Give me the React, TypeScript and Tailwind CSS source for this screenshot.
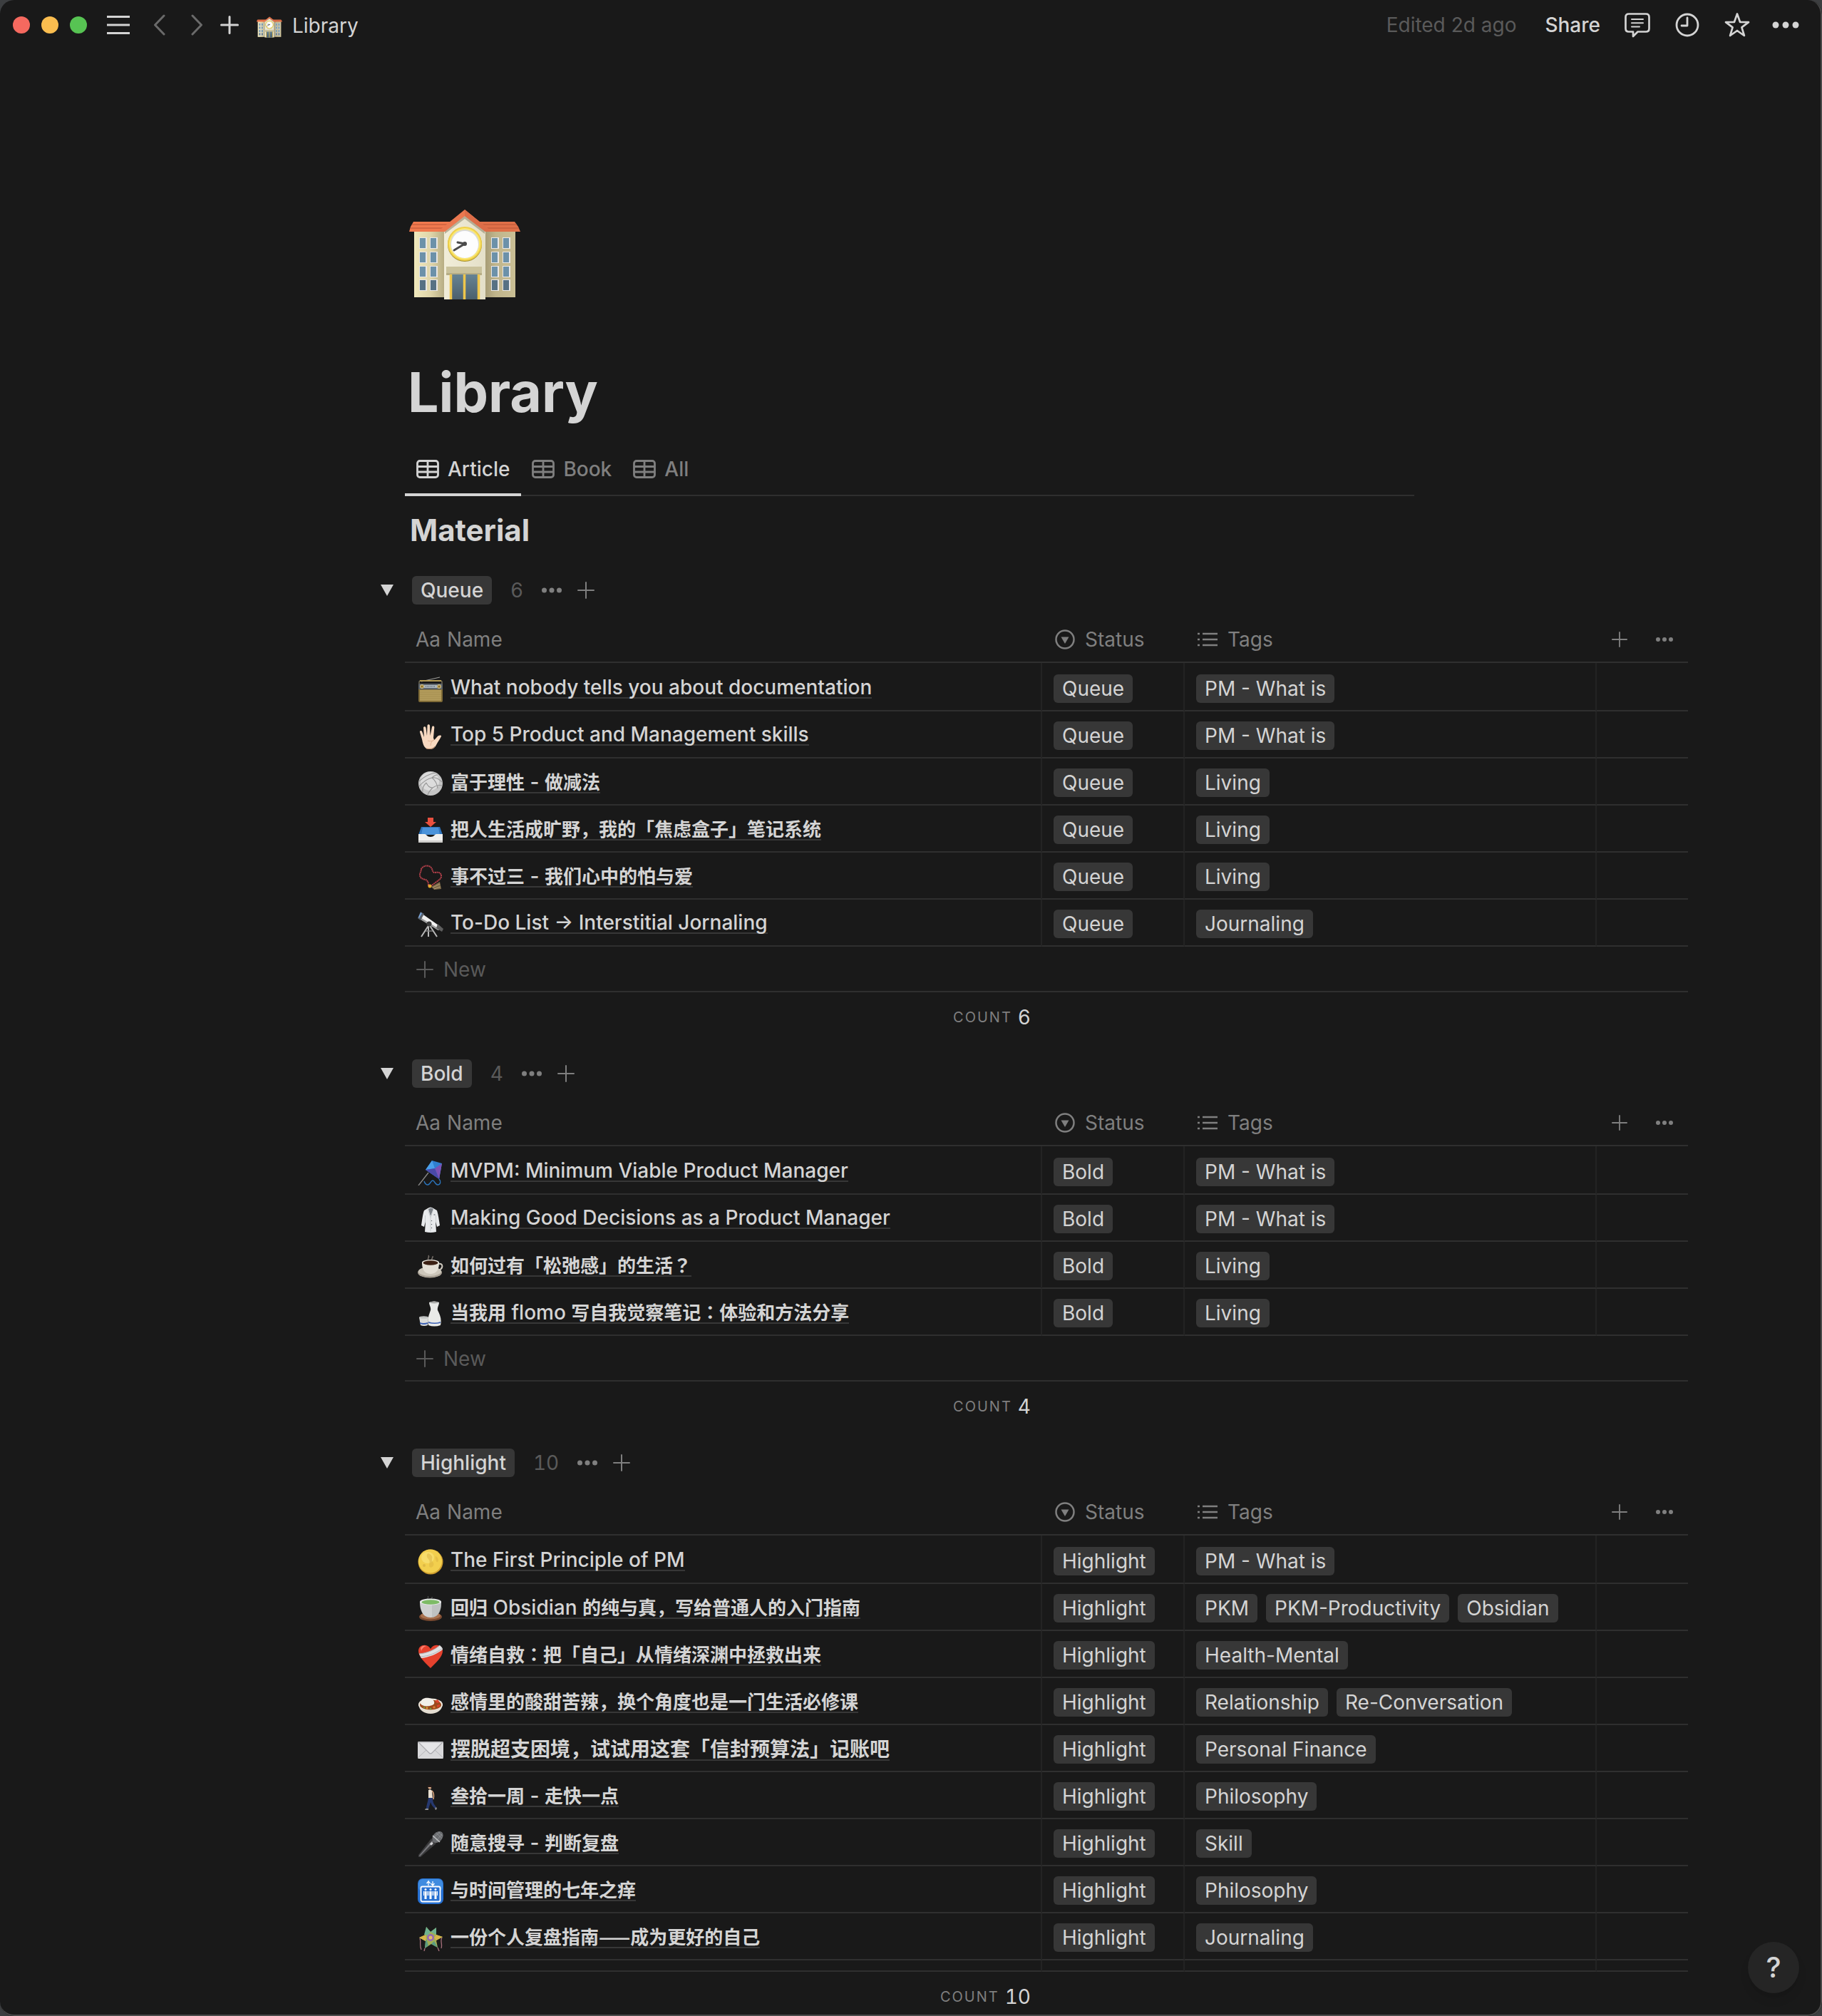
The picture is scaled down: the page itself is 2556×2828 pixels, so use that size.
import React from "react";

type IconProps = { className?: string };

function School({ className }: IconProps) {
  const rows = [39, 59, 79, 98];
  const cols = [14, 29, 115, 131];
  return (
    <svg viewBox="0 0 156 126" className={className} role="img" aria-label="School">
      <defs>
        <linearGradient id="wing-left" x1="0" x2="1">
          <stop offset="0" stopColor="#f1e9bd" />
          <stop offset="0.55" stopColor="#ded4a8" />
          <stop offset="1" stopColor="#b5ab82" />
        </linearGradient>
        <linearGradient id="wing-right" x1="0" x2="1">
          <stop offset="0" stopColor="#a79c76" />
          <stop offset="0.35" stopColor="#c0b58c" />
          <stop offset="1" stopColor="#cabf95" />
        </linearGradient>
        <linearGradient id="tower" x1="0" x2="1">
          <stop offset="0" stopColor="#f1edd8" />
          <stop offset="1" stopColor="#e4dfc8" />
        </linearGradient>
        <linearGradient id="door" x1="0" x2="0" y1="0" y2="1">
          <stop offset="0" stopColor="#668393" />
          <stop offset="1" stopColor="#4b5f6c" />
        </linearGradient>
      </defs>
      <rect x="7" y="28" width="43" height="95" fill="url(#wing-left)" />
      <rect x="107" y="28" width="42" height="95" fill="url(#wing-right)" />
      <path d="M6 17h54v14H0l2-7z" fill="#f0794e" />
      <path d="M96 17h52l5 7 3 7H96z" fill="#df7048" />
      <path d="M4 21h50M2 26h48M100 21h51M106 26h48" stroke="#b85436" strokeWidth="1" />
      <path d="M49 28 78 8l29 20v98H49z" fill="url(#tower)" />
      <path d="M78 8 106 29v5L78 13 50 34v-5z" fill="#8a8468" opacity="0.55" />
      <path d="M78 0 116 31h-9L78 9 50 31H40z" fill="#ea7850" />
      <path d="M78 0 116 31h-9L78 9z" fill="#dc6d48" />
      {rows.map((y) =>
        cols.map((x) => (
          <g key={`${x}-${y}`}>
            <rect x={x} y={y} width="11" height="16" fill="#e9e7e6" />
            <rect x={x + 1} y={y + 1} width="8" height="14" fill={y > 90 ? "#577184" : "#6c91a9"} />
          </g>
        ))
      )}
      <circle cx="78" cy="49" r="24" fill="#a38f2e" />
      <circle cx="78" cy="48" r="24" fill="#efd04a" />
      <circle cx="78" cy="48" r="22" fill="#fbe873" />
      <circle cx="78" cy="48" r="20" fill="#d9d9d9" />
      <circle cx="78" cy="49" r="19" fill="#fdfdfd" />
      <path d="M68 46l10 2-15 9" fill="none" stroke="#4b4b4b" strokeWidth="3" strokeLinecap="round" strokeLinejoin="round" />
      <circle cx="78" cy="48" r="3" fill="#4b4b4b" />
      <rect x="52" y="80" width="50" height="12" fill="#b6ad86" />
      <rect x="52" y="80" width="50" height="9" fill="#cac29c" />
      <rect x="57" y="91" width="42" height="35" fill="url(#door)" />
      <path d="M58.500 91v35M77.500 91v35M97.500 91v35" stroke="#eec64c" strokeWidth="3.500" />
    </svg>
  );
}

const emoji: Record<string, React.ReactNode> = {
  radio: (
    <>
      <path d="M5 7 31 1" stroke="#9a9a96" strokeWidth="1.200" />
      <path d="M2 15V8q0-2 2-2h28q2 0 2 2v7" fill="none" stroke="#6f6a58" strokeWidth="1.500" />
      <rect x="1" y="10" width="34" height="26" rx="2" fill="#7f6b37" />
      <rect x="3" y="5" width="30" height="2" fill="#b39a52" />
      <rect x="1" y="10" width="34" height="8" rx="1" fill="#5d646b" />
      <rect x="9" y="12" width="18" height="4" fill="#aeb8bf" />
      <path d="M11 14h14" stroke="#3c4247" strokeDasharray="1 1" />
      <circle cx="6" cy="14" r="3" fill="#c9b478" />
      <circle cx="30" cy="14" r="3" fill="#c9b478" />
      <circle cx="6" cy="14" r="1.500" fill="#8a6c22" />
      <circle cx="30" cy="14" r="1.500" fill="#8a6c22" />
      <rect x="3" y="19" width="30" height="15" fill="#b39c5c" />
      <path d="M3 22h30M3 25h30M3 28h30M3 31h30" stroke="#a58e50" strokeWidth="1" />
    </>
  ),
  hand: (
    <>
      <path
        d="M12 35C8 32 7 27 6 22L3 12c-.6-2 2-3 3-1l3 8L8 6c0-2 3-2.500 3.500 0L13 17l.500-14c0-2.500 3.500-2.500 3.500 0l.500 14L20 5c.500-2.300 3.500-1.800 3.300.500L22 20l1 3c2-1 4-5 6-6 2-1.200 4.500-.500 4 1-2 4-5 8-7 12-1.500 3-4 5.500-7 5.700-3 .300-5.500 0-7-.700z"
        fill="#f8d9c0"
      />
      <path d="M14 24c3 1 6 1 9-1-3 1-5 4-5 8" fill="none" stroke="#e2b393" strokeWidth="1" />
      <path d="M12 35c4 1 9 1 12-3" fill="none" stroke="#b98763" strokeWidth="1" />
    </>
  ),
  ball: (
    <>
      <circle cx="18" cy="18" r="17" fill="#c4c4c4" />
      <circle cx="17" cy="15" r="13" fill="#dcdcdc" />
      <path
        d="M2 15C8 9 15 5 25 3M2 22C8 15 15 11 20 10M7 30c-1-5 1-9 5-13M12 17c2 5 5 7 9 7M20 10c4 3 7 8 8 15M28 6c-4 0-6 2-8 4 4-1 9 1 14 6M21 24c4-3 9-4 13-3M21 24c-3 3-6 7-7 10"
        fill="none"
        stroke="#969696"
        strokeWidth="1.100"
      />
    </>
  ),
  inbox: (
    <>
      <path d="M5 13h26l4 11H1z" fill="#2f74bd" />
      <path d="M7 14h22l2 10H5z" fill="#4b93da" />
      <path d="M1 23h9c2 0 3 4 8 4s6-4 8-4h9v11q0 1-1 1H2q-1 0-1-1z" fill="#f1f0ee" />
      <path d="M1 32h34v2q0 1-1 1H2q-1 0-1-1z" fill="#cfcecb" />
      <path d="M14 0h8v6h4l-8 7-8-7h4z" fill="#e8503f" />
    </>
  ),
  beads: (
    <>
      <path
        d="M15 29c0-4-1-7-4-8-4-1-8-2-8-7 0-3 2-5 2-8 3-6 13-6 15 0 1 3 1 5 4 5 5-1 9 0 9 5 0 4-4 6-8 9l-8 6z"
        fill="none"
        stroke="#b3404a"
        strokeWidth="2"
        strokeDasharray="2 .6"
      />
      <circle cx="17" cy="30" r="2.500" fill="#e2a82f" />
      <path d="M19 31l12-7 2 10-10 1z" fill="#7d6a49" />
      <path d="M21 32l10-5M23 34l9-3" stroke="#b39b72" strokeWidth="1" />
    </>
  ),
  telescope: (
    <>
      <path d="M15 18v17M16 18 5 35M16 18l11 17" stroke="#b8b8b8" strokeWidth="2" />
      <path d="M11 27h10" stroke="#7f7f7f" strokeWidth="1.500" />
      <path d="M5 2 32 21l-3 5L1 9z" fill="#f1f1f1" />
      <path d="M1 9l28 17 1-2L2 7z" fill="#9b9b9b" />
      <path d="M4 0l5 3-5 9-4-3z" fill="#59616b" />
      <path d="M4 1l2 1-4 7-1-1z" fill="#7aa8e0" />
      <path d="M28 17l8 7-2 4-8-5z" fill="#5e5e5e" />
      <circle cx="16" cy="17" r="3.500" fill="#3a3a3a" />
    </>
  ),
  kite: (
    <>
      <path d="M15 18 1 36" stroke="#8b8b8b" strokeWidth="1.300" />
      <path d="M20 1 34 5 30 27 11 14z" fill="#2f7fd0" />
      <path d="M20 1l4 11-13 2z" fill="#4aa0ea" />
      <path d="M34 5 24 12l6 15z" fill="#7b52b5" />
      <path d="M24 12 11 14l19 13z" fill="#4a49a8" />
      <path d="M30 27c3 3 2 8-2 8s-4-6-7-6-3 6-7 6-4-3-5-5" fill="none" stroke="#2b74ba" strokeWidth="1.500" />
    </>
  ),
  coat: (
    <>
      <path d="M14 2q4-3 8 0l5 3c2 6 3 15 4 21l-4 2-2-8 1 15q-8 2-16 0l1-15-2 8-4-2C6 20 7 10 9 5z" fill="#e8eaec" />
      <path d="M15 3l3 10 4-10q-3-3-7 0z" fill="#7d8288" />
      <path d="M14 3l4 12 4-12M18 15v20M10.500 12v10M25.500 12v10" fill="none" stroke="#c1c5c8" strokeWidth="0.800" />
      <path d="M19.500 19v1M19.500 24v1M19.500 29v1M22.500 11h2" stroke="#595f66" strokeWidth="1.200" />
    </>
  ),
  coffee: (
    <>
      <path d="M15 8c-2-2 2-3 0-6M20 8c-1-2 2-3 1-5" fill="none" stroke="#77706a" strokeWidth="1.500" />
      <ellipse cx="17" cy="26" rx="17" ry="7.500" fill="#a9a195" />
      <ellipse cx="17" cy="24.500" rx="16" ry="6.500" fill="#cdc7bb" />
      <path d="M29 14c7-2 8 8-2 9" fill="none" stroke="#cfc9be" strokeWidth="2" />
      <path d="M6 12h24c0 9-3 16-12 16S6 21 6 12z" fill="#e4dfd5" />
      <ellipse cx="18" cy="12" rx="12" ry="4" fill="#efebe2" />
      <ellipse cx="18" cy="12.500" rx="10.500" ry="3.200" fill="#3c2013" />
    </>
  ),
  sake: (
    <>
      <path d="M16 2q7-3 14 0c0 4-3 7-2 11 3 6 6 12 4 21q-9 3-17 0c-2-9 1-15 3-21 1-4-2-7-2-11z" fill="#e9eae8" />
      <path d="M15 29q9 3 17 0l-.2 2q-8 2-16.600 0z" fill="#3d62b5" />
      <ellipse cx="23" cy="2" rx="6" ry="1.500" fill="#a9aaa8" />
      <path d="M2 23h13l-1 11q-5 2-10 0z" fill="#dcdddb" />
      <ellipse cx="8.500" cy="23" rx="6.500" ry="1.800" fill="#c1c3c2" />
      <path d="M3 30q5 2 11 0v2q-5 2-11 0z" fill="#3d62b5" />
    </>
  ),
  moon: (
    <>
      <circle cx="18" cy="18" r="17.500" fill="#cf9f2f" />
      <circle cx="17.500" cy="17" r="16.500" fill="#f2cf4e" />
      <ellipse cx="14" cy="12" rx="9" ry="8" fill="#f7dd6c" />
      <path d="M15 6c4 2 6 4 5 8s4 5 2 9-6 3-6 0 2-6-1-9-3-7 0-8zM25 10c4 2 5 6 3 8s-4-6-3-8z" fill="#d9b13f" opacity="0.5" />
      <circle cx="9" cy="23" r="2" fill="#dfb945" />
    </>
  ),
  tea: (
    <>
      <path d="M14 5c-1-2 2-3 0-5M19 5c-1-2 2-2 1-4" fill="none" stroke="#686868" strokeWidth="1" />
      <ellipse cx="18" cy="29" rx="16" ry="6" fill="#7b4a30" />
      <ellipse cx="18" cy="27.500" rx="14" ry="5" fill="#a8714e" />
      <path d="M3 8h30c0 10-3 22-15 22S3 18 3 8z" fill="#cfd1d1" />
      <path d="M20 10h13c0 10-3 19-13 20z" fill="#b4b7b8" opacity="0.6" />
      <ellipse cx="18" cy="8" rx="15" ry="4.500" fill="#e8eaea" />
      <ellipse cx="18" cy="8.500" rx="12.500" ry="3.200" fill="#7dbb66" />
    </>
  ),
  heart: (
    <>
      <path d="M18 35C10 27 1 19 1 11 1 1 14 0 18 8 22 0 35 1 35 11c0 8-9 16-17 24z" fill="#e5412d" />
      <path d="M4 7C6 3 10 3 12 4 8 5 6 8 5 11z" fill="#fb8171" />
      <path d="M2 15C13 14 23 10 31 3q3 2 4 6C27 15 16 20 5 21z" fill="#dfe1e3" />
      <path d="M2 15C13 14 23 10 31 3M4 19c12-1 22-5 31-12" fill="none" stroke="#b2b6ba" strokeWidth="1" />
    </>
  ),
  curry: (
    <>
      <path d="M1 20c1 8 8 13 17 13s16-5 17-13z" fill="#e4ddd1" />
      <ellipse cx="18" cy="20" rx="17" ry="8.500" fill="#efe9df" />
      <ellipse cx="18" cy="20.500" rx="15" ry="7" fill="#9c4a1d" />
      <path d="M4 19c0-8 7-9 12-8s8 4 7 8c-3 4-16 5-19 0z" fill="#f2efe8" />
      <path d="M24 15l4-2 3 4-4 1zM27 21l4-1v3l-4 1z" fill="#d9432a" />
      <circle cx="13" cy="25" r="1.500" fill="#d8a33b" />
      <circle cx="18" cy="26" r="1.300" fill="#6fa23f" />
      <circle cx="23" cy="24" r="1.800" fill="#d87b32" />
      <circle cx="9" cy="24" r="1.200" fill="#6fa23f" />
    </>
  ),
  envelope: (
    <>
      <rect x="0" y="6" width="36" height="24" rx="1.500" fill="#d8d8da" />
      <path d="M0 29 13 17M36 29 23 17" stroke="#b4b4b8" strokeWidth="1" />
      <path d="M1 7h34L20 22q-2 2-4 0z" fill="#e6e6e8" stroke="#aaaaae" strokeWidth="1.200" />
    </>
  ),
  walker: (
    <>
      <path d="M15 8q3-2 5 1l1 11h-6z" fill="#e9dfd0" />
      <path d="M20 9c3 3 3 7 2 12" fill="none" stroke="#dba57e" strokeWidth="1.500" />
      <circle cx="17" cy="4" r="2.500" fill="#e2b08c" />
      <path d="M13.500 4c0-5 7-5 7 0l-1 2-1-2z" fill="#241c1a" />
      <path d="M15 19h6c0 7 2 9 5 13l-2 2c-4-4-5-6-6-9-1 4-2 6-3 10h-3c0-6 2-9 3-16z" fill="#26386f" />
      <path d="M11 34h4v2h-5zM25 32l2 1-1 3-2-1z" fill="#8f8f91" />
    </>
  ),
  mic: (
    <>
      <path d="M19 10l7 7L4 36H1v-3z" fill="#3c3c3e" />
      <path d="M20 13l2 2L3 35l-1-1z" fill="#77777b" />
      <rect x="17" y="16" width="4" height="3" fill="#d6d6d8" transform="rotate(-45 19 17)" />
      <ellipse cx="28" cy="8" rx="6.500" ry="9" fill="#6a6c6f" transform="rotate(40 28 8)" />
      <path d="M26 2l8 8M29 1l6 6M31 1 22 9M34 4l-8 9" stroke="#94969a" strokeWidth="0.700" />
      <path d="M21 6l10 9" stroke="#bfc0c2" strokeWidth="1.500" />
    </>
  ),
  elevator: (
    <>
      <rect x="0" y="0" width="36" height="36" rx="7" fill="#2670d2" />
      <rect x="1" y="1" width="34" height="17" rx="6" fill="#3f8be0" />
      <path d="M15 10V4l-2.500 3M15 4l2.500 3M21 4v6l-2.500-3M21 10l2.500-3" fill="none" stroke="#fff" strokeWidth="1.200" />
      <rect x="4.500" y="11.500" width="27" height="21" rx="2" fill="#2670d2" stroke="#fff" strokeWidth="1.800" />
      <path d="M11 18v11M18 18v11M25 18v11" stroke="#fff" strokeWidth="3" />
      <path d="M8.500 18v6M13.500 18v6M15.500 18v6M20.500 18v6M22.500 18v6M27.500 18v6" stroke="#fff" strokeWidth="1" />
      <circle cx="11" cy="15.500" r="1.500" fill="#fff" />
      <circle cx="18" cy="15.500" r="1.500" fill="#fff" />
      <circle cx="25" cy="15.500" r="1.500" fill="#fff" />
    </>
  ),
  pinata: (
    <>
      <path d="M12 2l6 7 8-6v10l9 3-9 5 2 10-9-5-9 6 1-10-9-5 9-4z" fill="#a3ad55" />
      <path d="M12 2l6 7-4 5-5-1zM26 3v10l-4-2-4-2z" fill="#6fb28f" />
      <path d="M35 16l-9 5-3-4 3-4zM2 17l9-4 1 6-1 3z" fill="#d6b64a" />
      <path d="M12 19l-1 3-1 10 5-4zM23 22l5 9-9-5z" fill="#5a9c80" />
      <circle cx="18" cy="17" r="5" fill="#9668b4" />
      <circle cx="18" cy="17" r="2.500" fill="#dfc069" />
      <path d="M3 18c2 5-1 9 2 16M34 17c-3 5 1 9-1 15M10 32l-1 4M28 31l2 5" fill="none" stroke="#a7707c" strokeWidth="1.300" />
    </>
  ),
};

function Plus({ className }: IconProps) {
  return (
    <svg viewBox="0 0 24 24" className={className} fill="none" stroke="currentColor" strokeWidth="2" strokeLinecap="round" aria-hidden="true">
      <path d="M12 1v22M1 12h22" />
    </svg>
  );
}

function Dots({ className }: IconProps) {
  return (
    <svg viewBox="0 0 28 8" className={className} fill="currentColor" aria-hidden="true">
      <circle cx="3.500" cy="4" r="3.500" />
      <circle cx="14" cy="4" r="3.500" />
      <circle cx="24.500" cy="4" r="3.500" />
    </svg>
  );
}

function TableIcon() {
  return (
    <svg viewBox="0 0 32 26" className="h-[26px] w-8" fill="none" stroke="currentColor" strokeWidth="2.800" aria-hidden="true">
      <rect x="1.500" y="1.500" width="29" height="23" rx="3.500" />
      <path d="M1 9.500h30M1 17h30M16 2v22" />
    </svg>
  );
}

type Row = { icon: string; title: string; tags: string[] };
type Group = { name: string; count: number; rows: Row[]; clipped?: boolean };

const groups: Group[] = [
  {
    name: "Queue",
    count: 6,
    rows: [
      { icon: "radio", title: "What nobody tells you about documentation", tags: ["PM - What is"] },
      { icon: "hand", title: "Top 5 Product and Management skills", tags: ["PM - What is"] },
      { icon: "ball", title: "富于理性 - 做减法", tags: ["Living"] },
      { icon: "inbox", title: "把人生活成旷野，我的「焦虑盒子」笔记系统", tags: ["Living"] },
      { icon: "beads", title: "事不过三 - 我们心中的怕与爱", tags: ["Living"] },
      { icon: "telescope", title: "To-Do List → Interstitial Jornaling", tags: ["Journaling"] },
    ],
  },
  {
    name: "Bold",
    count: 4,
    rows: [
      { icon: "kite", title: "MVPM: Minimum Viable Product Manager", tags: ["PM - What is"] },
      { icon: "coat", title: "Making Good Decisions as a Product Manager", tags: ["PM - What is"] },
      { icon: "coffee", title: "如何过有「松弛感」的生活？", tags: ["Living"] },
      { icon: "sake", title: "当我用 flomo 写自我觉察笔记：体验和方法分享", tags: ["Living"] },
    ],
  },
  {
    name: "Highlight",
    count: 10,
    clipped: true,
    rows: [
      { icon: "moon", title: "The First Principle of PM", tags: ["PM - What is"] },
      { icon: "tea", title: "回归 Obsidian 的纯与真，写给普通人的入门指南", tags: ["PKM", "PKM-Productivity", "Obsidian"] },
      { icon: "heart", title: "情绪自救：把「自己」从情绪深渊中拯救出来", tags: ["Health-Mental"] },
      { icon: "curry", title: "感情里的酸甜苦辣，换个角度也是一门生活必修课", tags: ["Relationship", "Re-Conversation"] },
      { icon: "envelope", title: "摆脱超支困境，试试用这套「信封预算法」记账吧", tags: ["Personal Finance"] },
      { icon: "walker", title: "叁拾一周 - 走快一点", tags: ["Philosophy"] },
      { icon: "mic", title: "随意搜寻 - 判断复盘", tags: ["Skill"] },
      { icon: "elevator", title: "与时间管理的七年之痒", tags: ["Philosophy"] },
      { icon: "pinata", title: "一份个人复盘指南——成为更好的自己", tags: ["Journaling"] },
    ],
  },
];

/* Han text is set a little smaller than Latin; colons and question marks are centred in their square. */
function Title({ row }: { row: Row }) {
  const size = row.icon === "envelope" ? "text-[28px]" : "text-[26px]";
  const parts = row.title.split(/([：？]|[\u3000-\u9fff，—]+)/).filter(Boolean);
  return (
    <>
      {parts.map((part, i) => {
        if (/^[：？]$/.test(part))
          return (
            <span key={i} className={`${size} font-bold font-['Noto_Sans_CJK_TC',sans-serif]`}>
              {part}
            </span>
          );
        if (/[\u3000-\u9fff，—]/.test(part))
          return (
            <span key={i} className={`${size} font-bold font-['Noto_Sans_CJK_SC',sans-serif]`}>
              {part}
            </span>
          );
        return <React.Fragment key={i}>{part}</React.Fragment>;
      })}
    </>
  );
}

function Chip({ children }: { children: React.ReactNode }) {
  return <span className="flex h-10 items-center whitespace-nowrap rounded-md bg-[#373737] px-3 text-[28px] text-[#d4d4d4]">{children}</span>;
}

function GroupSection({ group }: { group: Group }) {
  return (
    <section className="w-[1800px]">
      <div className="-ml-[34px] flex h-10 items-center">
        <button aria-label={`Collapse ${group.name}`} className="mr-[26px] text-[#d4d4d4]">
          <svg viewBox="0 0 18 16" className="h-4 w-[18px]" fill="currentColor" aria-hidden="true">
            <path d="M0 0h18L9 16z" />
          </svg>
        </button>
        <h3 className="flex h-10 items-center rounded-md bg-[#373737] px-3 text-[28px] font-medium">{group.name}</h3>
        <span className="ml-[26px] text-[28px] tabular-nums text-[#5a5a5a]">{group.count}</span>
        <button aria-label="Group options" className="ml-[26px] text-[#7f7f7f]">
          <Dots className="h-2 w-7" />
        </button>
        <button aria-label="Add to group" className="ml-[22px] text-[#7f7f7f]">
          <Plus className="h-6 w-6" />
        </button>
      </div>
      <table className="mt-5 w-full table-fixed border-separate border-spacing-0">
        <colgroup>
          <col className="w-[894px]" />
          <col className="w-[200px]" />
          <col className="w-[578px]" />
          <col />
        </colgroup>
        <thead>
          <tr className="text-left text-[28px] text-[#7f7f7f] [&>th]:h-[62px] [&>th]:border-b-2 [&>th]:border-[#2f2f2f] [&>th]:p-0 [&>th]:pb-[3px] [&>th]:font-normal">
            <th scope="col">
              <div className="flex items-center gap-[9px] pl-[15px]">
                <span aria-hidden="true">Aa</span>
                <span>Name</span>
              </div>
            </th>
            <th scope="col">
              <div className="flex items-center gap-[14px] pl-[18px]">
                <svg viewBox="0 0 28 28" className="h-7 w-7" fill="none" stroke="currentColor" strokeWidth="2.500" aria-hidden="true">
                  <circle cx="14" cy="14" r="12.500" />
                  <path d="M8.500 10.500h11L14 20z" fill="currentColor" stroke="none" />
                </svg>
                Status
              </div>
            </th>
            <th scope="col">
              <div className="flex items-center gap-[14px] pl-[18px]">
                <svg viewBox="0 0 28 28" className="h-7 w-7" stroke="currentColor" strokeWidth="2.500" aria-hidden="true">
                  <path d="M7 6h21M7 14h21M7 22h21M0 6h3M0 14h3M0 22h3" />
                </svg>
                Tags
              </div>
            </th>
            <th scope="col">
              <div className="flex items-center gap-10 pl-[21px]">
                <button aria-label="Add column">
                  <Plus className="h-[22px] w-[22px]" />
                </button>
                <button aria-label="Column options">
                  <Dots className="h-2 w-6" />
                </button>
              </div>
            </th>
          </tr>
        </thead>
        <tbody className="[&>tr:first-child]:h-[68px] [&_td]:border-b-2 [&_td]:border-b-[#2f2f2f] [&_td]:border-r-[#232323] [&_td]:p-0 [&_td]:align-bottom">
          {group.rows.map((row) => (
            <tr key={row.title} className="h-[66px]">
              <td className="border-r-2">
                <div className="flex h-16 items-start gap-[10px] pl-[18px]">
                  <svg viewBox="0 0 36 36" className="mt-[17px] h-9 w-9 shrink-0" aria-hidden="true">
                    {emoji[row.icon]}
                  </svg>
                  <a href="#" className="mt-[18px] whitespace-nowrap border-b-2 border-[#373737] text-[28px] font-medium leading-7">
                    <Title row={row} />
                  </a>
                </div>
              </td>
              <td className="border-r-2">
                <div className="flex h-16 pl-4 pt-[14px]">
                  <Chip>{group.name}</Chip>
                </div>
              </td>
              <td className="border-r-2">
                <div className="flex h-16 gap-3 pl-4 pt-[14px]">
                  {row.tags.map((tag) => (
                    <Chip key={tag}>{tag}</Chip>
                  ))}
                </div>
              </td>
              <td />
            </tr>
          ))}
          {group.clipped ? (
            <tr className="h-4">
              <td className="border-r-2" />
              <td className="border-r-2" />
              <td className="border-r-2" />
              <td />
            </tr>
          ) : (
            <tr className="h-16">
              <td colSpan={4}>
                <button className="flex h-[62px] w-full items-center gap-[14px] pl-4 pt-[2px] text-[28px] text-[#5a5a5a]">
                  <Plus className="h-6 w-6" />
                  New
                </button>
              </td>
            </tr>
          )}
        </tbody>
      </table>
      <div className="flex h-[70px] w-[878px] items-center justify-end gap-2">
        <span className="text-[20px] tracking-[2px] text-[#7f7f7f]">COUNT</span>
        <span className="text-[28px] tabular-nums">{group.count}</span>
      </div>
    </section>
  );
}

export default function App() {
  return (
    <div className="h-screen overflow-hidden bg-[#3c3e40] font-[Inter,'Noto_Sans_CJK_SC',sans-serif] text-[#d4d4d4]">
      <div className="relative h-full overflow-hidden rounded-[20px] bg-[#191919]">
        <header className="flex h-[70px] items-center justify-between pl-[18px] pr-8 text-[28px]">
          <nav className="flex items-center" aria-label="Window">
            <div className="mr-7 flex gap-4">
              <button aria-label="Close" className="h-6 w-6 rounded-full bg-[#f5695f]" />
              <button aria-label="Minimise" className="h-6 w-6 rounded-full bg-[#fabd4f]" />
              <button aria-label="Zoom" className="h-6 w-6 rounded-full bg-[#57c353]" />
            </div>
            <button aria-label="Open sidebar">
              <svg viewBox="0 0 32 28" className="h-7 w-8" stroke="currentColor" strokeWidth="3" aria-hidden="true">
                <path d="M0 2.500h32M0 14h32M0 25.500h32" />
              </svg>
            </button>
            <button aria-label="Back" className="ml-[33px] text-[#6a6a6a]">
              <svg viewBox="0 0 18 30" className="h-[30px] w-[18px]" fill="none" stroke="currentColor" strokeWidth="3" strokeLinecap="round" strokeLinejoin="round" aria-hidden="true">
                <path d="M15 2 2.500 15 15 28" />
              </svg>
            </button>
            <button aria-label="Forward" className="ml-[34px] text-[#6a6a6a]">
              <svg viewBox="0 0 18 30" className="h-[30px] w-[18px]" fill="none" stroke="currentColor" strokeWidth="3" strokeLinecap="round" strokeLinejoin="round" aria-hidden="true">
                <path d="M3 2l12.500 13L3 28" />
              </svg>
            </button>
            <button aria-label="New page" className="ml-6">
              <svg viewBox="0 0 26 26" className="h-[26px] w-[26px]" stroke="currentColor" strokeWidth="3" strokeLinecap="round" aria-hidden="true">
                <path d="M13 1.500v23M1.500 13h23" />
              </svg>
            </button>
            <a href="#" className="ml-[25px] flex items-center gap-[14px] pt-[2px]">
              <School className="mt-1 h-[30px] w-9" />
              Library
            </a>
          </nav>
          <div className="flex items-center">
            <span className="text-[#5a5a5a]">Edited 2d ago</span>
            <button className="ml-10 font-medium">Share</button>
            <button aria-label="Comments" className="ml-[34px]">
              <svg viewBox="0 0 36 36" className="h-9 w-9" fill="none" stroke="currentColor" strokeWidth="2.700" strokeLinejoin="round" strokeLinecap="round" aria-hidden="true">
                <path d="M6 2.500h24q4.500 0 4.500 4.500v16q0 4.500-4.500 4.500H18.500L12 34v-6.500H6q-4.500 0-4.500-4.500V7q0-4.500 4.500-4.500z" />
                <path d="M10 10h16M10 15.300h16M10 20.500h11" strokeWidth="2" />
              </svg>
            </button>
            <button aria-label="Updates" className="ml-[35px]">
              <svg viewBox="0 0 34 34" className="h-[34px] w-[34px]" fill="none" stroke="currentColor" strokeWidth="2.800" strokeLinecap="round" strokeLinejoin="round" aria-hidden="true">
                <circle cx="17" cy="17" r="15" />
                <path d="M17 7v11H9" />
              </svg>
            </button>
            <button aria-label="Favourite" className="ml-[35px]">
              <svg viewBox="0 0 36 36" className="h-9 w-9" fill="none" stroke="currentColor" strokeWidth="2.700" strokeLinejoin="round" aria-hidden="true">
                <path d="M18 2.500l4 11.300 12 .300-9.600 7.300 3.500 11.600L18 26l-9.900 7 3.500-11.600L2 14.100l12-.300z" />
              </svg>
            </button>
            <button aria-label="More" className="ml-[31px]">
              <svg viewBox="0 0 38 10" className="h-[10px] w-[38px]" fill="currentColor" aria-hidden="true">
                <circle cx="5" cy="5" r="4.500" />
                <circle cx="19" cy="5" r="4.500" />
                <circle cx="33" cy="5" r="4.500" />
              </svg>
            </button>
          </div>
        </header>

        <main className="mx-auto w-full max-w-[1420px] pt-56">
          <School className="ml-[6px] h-[126px] w-[156px]" />
          <h1 className="mt-[82px] pl-1 text-[77px] font-bold leading-[96px]">Library</h1>
          <div role="tablist" className="mr-1 mt-[22px] flex h-[76px] border-b-2 border-[#2f2f2f] text-[28px] font-medium text-[#7f7f7f]">
            <button role="tab" aria-selected="true" className="-mb-[2px] flex items-center gap-3 border-b-4 border-[#d4d4d4] px-4 pt-1 text-[#d4d4d4]">
              <TableIcon />
              Article
            </button>
            <button role="tab" aria-selected="false" className="flex items-center gap-3 px-[15px] pt-[2px]">
              <TableIcon />
              Book
            </button>
            <button role="tab" aria-selected="false" className="flex items-center gap-3 px-[15px] pt-[2px]">
              <TableIcon />
              All
            </button>
          </div>
          <h2 className="mt-[22px] pl-[7px] text-[42px] font-bold leading-[52px]">Material</h2>
          <div className="mt-[38px] flex flex-col gap-6">
            {groups.map((g) => (
              <GroupSection key={g.name} group={g} />
            ))}
          </div>
        </main>

        <button aria-label="Help" className="absolute bottom-8 right-8 flex h-[72px] w-[72px] items-center justify-center rounded-full bg-[#252525] text-[40px] font-medium shadow-lg">
          ?
        </button>
        <div className="pointer-events-none absolute inset-0 rounded-[20px] border-b-2 border-r-2 border-[#4a4a4a]" />
      </div>
    </div>
  );
}
